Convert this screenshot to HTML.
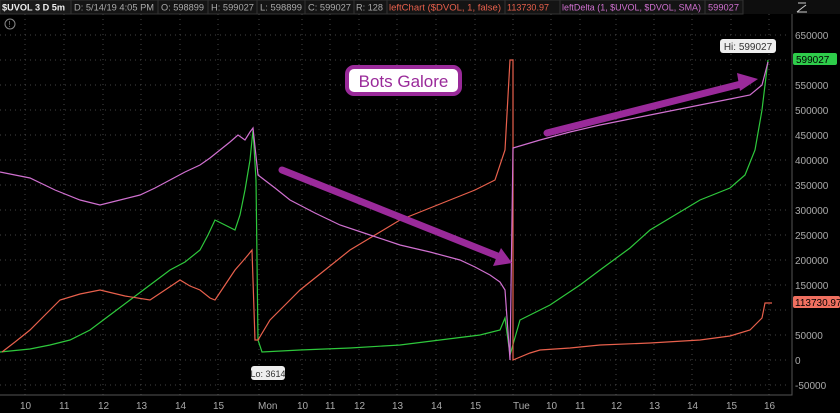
<!DOCTYPE html><html><head><style>
body{margin:0;background:#000;width:840px;height:413px;overflow:hidden;font-family:"Liberation Sans",sans-serif}
</style></head><body>
<svg width="840" height="413" xmlns="http://www.w3.org/2000/svg" style="position:absolute;left:0;top:0">
<rect width="840" height="413" fill="#000"/>
<rect x="0" y="0" width="840" height="14" fill="#0e0e0e"/>
<g font-size="9" fill="#aaa" lengthAdjust="spacingAndGlyphs">
<rect x="0" y="0" width="71" height="14" fill="#1a1a1a" stroke="#333"/><text x="2" y="10.5" fill="#eee" font-weight="bold" textLength="63" lengthAdjust="spacingAndGlyphs">$UVOL 3 D 5m</text>
<rect x="71" y="0" width="87" height="14" fill="#141414" stroke="#333"/><text x="74" y="10.5" textLength="80" lengthAdjust="spacingAndGlyphs">D: 5/14/19 4:05 PM</text>
<rect x="158" y="0" width="50" height="14" fill="#141414" stroke="#333"/><text x="161" y="10.5" textLength="43" lengthAdjust="spacingAndGlyphs">O: 598899</text>
<rect x="208" y="0" width="49" height="14" fill="#141414" stroke="#333"/><text x="211" y="10.5" textLength="43" lengthAdjust="spacingAndGlyphs">H: 599027</text>
<rect x="257" y="0" width="48" height="14" fill="#141414" stroke="#333"/><text x="260" y="10.5" textLength="42" lengthAdjust="spacingAndGlyphs">L: 598899</text>
<rect x="305" y="0" width="49" height="14" fill="#141414" stroke="#333"/><text x="308" y="10.5" textLength="43" lengthAdjust="spacingAndGlyphs">C: 599027</text>
<rect x="354" y="0" width="33" height="14" fill="#141414" stroke="#333"/><text x="356" y="10.5" textLength="27" lengthAdjust="spacingAndGlyphs">R: 128</text>
<rect x="387" y="0" width="118" height="14" fill="#141414" stroke="#333"/><text x="389" y="10.5" fill="#e8604c" textLength="112" lengthAdjust="spacingAndGlyphs">leftChart ($DVOL, 1, false)</text>
<rect x="505" y="0" width="55" height="14" fill="#141414" stroke="#333"/><text x="507" y="10.5" fill="#e8604c" textLength="42" lengthAdjust="spacingAndGlyphs">113730.97</text>
<rect x="560" y="0" width="145" height="14" fill="#141414" stroke="#333"/><text x="562" y="10.5" fill="#d070d0" textLength="139" lengthAdjust="spacingAndGlyphs">leftDelta (1, $UVOL, $DVOL, SMA)</text>
<rect x="705" y="0" width="38" height="14" fill="#141414" stroke="#333"/><text x="708" y="10.5" fill="#d070d0" textLength="31" lengthAdjust="spacingAndGlyphs">599027</text>
</g>
<path d="M797 12 h10 M797 12 l5-4 l4-3 M798 3h8" stroke="#ccc" fill="none"/>
<circle cx="10" cy="24" r="5" stroke="#888" fill="none"/><text x="8.5" y="27" font-size="8" fill="#888">!</text>
<g stroke="#444" stroke-dasharray="1,4">
<path d="M0 35H790M0 60H790M0 85H790M0 110H790M0 135H790M0 160H790M0 185H790M0 210H790M0 235H790M0 260H790M0 285H790M0 310H790M0 335H790M0 360H790M0 385H790"/>
<path d="M25 14V395M64 14V395M103 14V395M141 14V395M180 14V395M218 14V395M259 14V395M302 14V395M330 14V395M359 14V395M397 14V395M436 14V395M475 14V395M513 14V395M551 14V395M580 14V395M616 14V395M654 14V395M692 14V395M731 14V395M769 14V395"/>
</g>
<path d="M792 14V395H0" stroke="#555" fill="none"/>
<g font-size="10" fill="#aaa">
<text x="795" y="39">650000</text><text x="795" y="89">550000</text><text x="795" y="114">500000</text><text x="795" y="139">450000</text><text x="795" y="164">400000</text><text x="795" y="189">350000</text><text x="795" y="214">300000</text><text x="795" y="239">250000</text><text x="795" y="264">200000</text><text x="795" y="289">150000</text><text x="795" y="339">50000</text><text x="795" y="364">0</text><text x="795" y="389">-50000</text>
</g>
<rect x="793" y="53" width="44" height="12" rx="2" fill="#2ecc4a"/><text x="796" y="63" font-size="10" fill="#000">599027</text>
<rect x="793" y="296" width="47" height="12" rx="2" fill="#f07060"/><text x="795" y="306" font-size="10" fill="#000">113730.97</text>
<g font-size="10" fill="#aaa">
<text x="20" y="409">10</text><text x="59" y="409">11</text><text x="98" y="409">12</text><text x="136" y="409">13</text><text x="175" y="409">14</text><text x="213" y="409">15</text><text x="258" y="409">Mon</text><text x="297" y="409">10</text><text x="325" y="409">11</text><text x="354" y="409">12</text><text x="392" y="409">13</text><text x="431" y="409">14</text><text x="470" y="409">15</text><text x="513" y="409">Tue</text><text x="546" y="409">10</text><text x="575" y="409">11</text><text x="611" y="409">12</text><text x="649" y="409">13</text><text x="687" y="409">14</text><text x="726" y="409">15</text><text x="764" y="409">16</text>
</g>
<g fill="none" stroke-width="1.2">
<polyline stroke="#2ec83c" points="0,352 30,349 50,345 70,340 90,330 110,315 130,300 150,285 170,270 185,262 200,250 208,235 215,220 225,225 235,230 240,215 245,190 250,160 253,130 256,180 258,340 262,352 300,350 350,348 400,345 440,340 480,335 500,330 505,318 510,355 520,320 550,305 580,285 600,270 630,248 650,230 680,212 700,200 730,188 745,175 755,150 762,110 768,60"/>
<polyline stroke="#e8604c" points="2,352 15,342 30,330 45,315 60,300 80,294 100,290 125,296 150,300 165,290 180,280 190,286 200,290 210,298 215,300 225,285 235,270 242,262 248,255 252,250 255,340 258,340 270,320 285,305 300,290 325,270 350,250 375,235 400,220 425,210 450,200 475,190 495,180 505,150 510,60 513,60 513,360 530,353 540,350 570,348 600,345 650,343 700,340 730,336 750,330 762,318 765,303 772,303"/>
<polyline stroke="#d070d0" points="0,172 15,175 30,178 55,190 80,200 100,205 120,200 140,195 155,188 170,180 185,172 200,165 210,158 220,150 230,142 238,135 245,140 250,132 253,128 258,175 275,188 290,200 315,213 340,225 370,235 400,245 430,252 460,260 475,267 490,275 500,282 505,290 510,360 513,148 540,140 570,132 600,125 625,120 650,115 675,110 700,105 725,100 750,95 762,85 768,62"/>
</g>
<g stroke="#9a2a9a" stroke-width="7" stroke-linecap="round">
<line x1="282" y1="170" x2="500" y2="257"/><line x1="547" y1="133" x2="745" y2="83"/>
</g>
<polygon points="512,263 493,266 501,248" fill="#9a2a9a"/>
<polygon points="758,79 740,91 737,73" fill="#9a2a9a"/>
<rect x="347" y="67" width="113" height="27" rx="7" fill="#fff" stroke="#9a2a9a" stroke-width="4"/>
<text x="403.5" y="87" font-size="17" fill="#9a2a9a" text-anchor="middle">Bots Galore</text>
<rect x="720" y="39" width="56" height="14" rx="3" fill="#eee"/><text x="748" y="50" font-size="10" fill="#333" text-anchor="middle">Hi: 599027</text>
<rect x="251" y="366" width="34" height="14" rx="3" fill="#eee"/><text x="268" y="377" font-size="9" fill="#333" text-anchor="middle">Lo: 3614</text>
</svg>
</body></html>
